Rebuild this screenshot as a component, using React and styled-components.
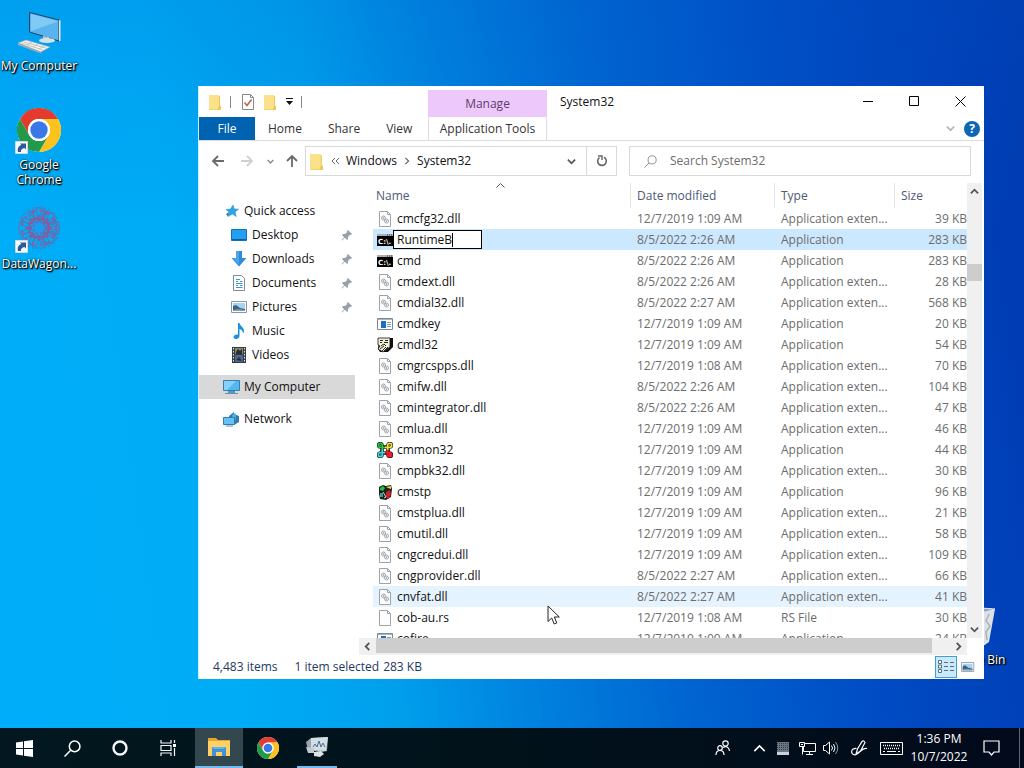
import React from 'react';
import styled, { createGlobalStyle } from 'styled-components';

const GlobalStyle = createGlobalStyle`
  * {
    box-sizing: border-box;
  }

  body {
    margin: 0;
    font-family: 'Open Sans', 'Noto Sans', sans-serif;
    font-size: 12px;
    line-height: 16px;
    color: #111;
  }

  button, input {
    font: inherit;
    color: inherit;
    margin: 0;
    padding: 0;
    border: 0;
    background: none;
  }

  button {
    cursor: default;
  }

  svg {
    display: block;
    flex: none;
  }
`;

const Screen = styled.div`
  display: flex;
  flex-direction: column;
  height: 100vh;
  overflow: hidden;
  background:
    linear-gradient(180deg, rgba(0, 90, 200, 0.16), rgba(0, 90, 200, 0) 30%),
    linear-gradient(82deg, #00adf8 0%, #00acf6 22%, #009fec 36%, #0084e0 47%, #0064d0 62%, #004cc4 78%, #003eb6 94%, #003ab0 100%);
`;

const Desktop = styled.main`
  position: relative;
  flex: 1;
  min-height: 0;
`;

const Shortcuts = styled.div`
  display: flex;
  flex-direction: column;
  width: 78px;
  padding-top: 8px;
`;

const Shortcut = styled.button`
  display: flex;
  flex-direction: column;
  align-items: center;
  gap: 2px;
  min-height: 99px;
  line-height: 15px;
  color: #fff;
  text-shadow: 1px 1px 1px #000, 1px 1px 2px #000, 0 0 2px rgba(0, 0, 0, 0.8);
`;

const Bin = styled(Shortcut)`
  position: absolute;
  right: 12px;
  bottom: 27px;
  width: 76px;
`;

const Window = styled.section`
  position: absolute;
  top: 86px;
  right: 40px;
  bottom: 49px;
  left: 198px;
  display: flex;
  flex-direction: column;
  background: #fff;
  border-left: 1px solid #c4f3ff;
`;

const Ribbon = styled.header`
  display: flex;
  height: 55px;
  border-bottom: 1px solid #dcdcdc;
`;

const RibbonPart = styled.div`
  display: flex;
  flex-direction: column;
  flex: ${p => (p.$grow ? 1 : 'none')};
  width: ${p => (p.$grow ? 'auto' : '229px')};
`;

const QuickTools = styled.div`
  display: flex;
  align-items: center;
  gap: 7px;
  height: 31px;
  padding-left: 8px;
`;

const Bar = styled.span`
  width: 1px;
  height: 12px;
  margin-right: 3px;
  background: #888;
`;

const Tabs = styled.nav`
  display: flex;
  height: 23px;
`;

const Tab = styled.button`
  flex: none;
  padding: 0 13px;
  color: #333;
`;

const FileTab = styled(Tab)`
  width: 56px;
  background: #0063b1;
  color: #fff;
`;

const ContextTab = styled.div`
  display: flex;
  flex-direction: column;
  width: 119px;
  padding-top: 4px;
`;

const ContextTitle = styled.div`
  height: 27px;
  line-height: 27px;
  text-align: center;
  background: #ecc8fb;
  color: #5b3f6b;
`;

const ContextButton = styled.button`
  height: 23px;
  border: solid #e2dbe6;
  border-width: 0 1px;
  color: #333;
`;

const TitleRow = styled.div`
  display: flex;
  height: 31px;
  line-height: 31px;
  padding: 0 1px 0 13px;
`;

const Title = styled.h1`
  flex: 1;
  margin: 0;
  font-size: 12px;
  font-weight: 400;
`;

const WindowButton = styled.button`
  display: flex;
  align-items: center;
  justify-content: center;
  width: 46px;
`;

const HelpRow = styled.div`
  display: flex;
  align-items: center;
  justify-content: flex-end;
  gap: 9px;
  height: 23px;
  padding-right: 4px;
`;

const Help = styled.button`
  width: 16px;
  height: 16px;
  border-radius: 50%;
  background: #0c66b4;
  color: #fff;
  font-weight: 700;
  line-height: 16px;
`;

const AddressRow = styled.div`
  display: flex;
  align-items: center;
  height: 42px;
  padding: 0 13px 2px 12px;
`;

const NavButtons = styled.div`
  display: flex;
  align-items: center;
  gap: 15px;
  width: 88px;
  margin-right: 6px;

  svg:nth-child(3) {
    margin: 0 -4px 0 -2px;
  }
`;

const AddressBox = styled.div`
  display: flex;
  align-items: center;
  flex: 1;
  gap: 6px;
  height: 30px;
  padding-left: 2px;
  border: 1px solid #d9d9d9;
`;

const Crumb = styled.button`
  color: #111;
`;

const AddressEnd = styled.div`
  display: flex;
  align-items: center;
  align-self: stretch;
  gap: 10px;
  margin-left: auto;
`;

const Refresh = styled.button`
  display: flex;
  align-items: center;
  justify-content: center;
  align-self: stretch;
  width: 30px;
  border-left: 1px solid #d9d9d9;
`;

const SearchBox = styled.label`
  display: flex;
  align-items: center;
  gap: 13px;
  width: 342px;
  height: 30px;
  margin-left: 12px;
  padding-left: 14px;
  border: 1px solid #d9d9d9;

  input {
    flex: 1;
    min-width: 0;
    outline: 0;
  }

  input::placeholder {
    color: #6d6d6d;
    opacity: 1;
  }
`;

const Body = styled.div`
  display: flex;
  flex: 1;
  min-height: 0;
  padding-right: 2px;
`;

const Sidebar = styled.nav`
  width: 156px;
  margin-right: 4px;
  padding-top: 16px;
`;

const Place = styled.button`
  display: flex;
  align-items: center;
  gap: 4px;
  width: 100%;
  height: 24px;
  margin-bottom: ${p => (p.$last ? 8 : 0)}px;
  padding: 0 2px 0 ${p => (p.$nested ? 32 : 24)}px;
  background: ${p => (p.$active ? '#d9d9d9' : 'none')};

  svg:last-child:not(:first-child) {
    margin-left: auto;
  }
`;

const Content = styled.div`
  display: flex;
  flex-direction: column;
  flex: 1;
  min-width: 0;
`;

const ListArea = styled.div`
  flex: 1;
  min-height: 0;
  overflow: hidden;
  padding-left: 14px;
`;

const FileTable = styled.table`
  width: 100%;
  table-layout: fixed;
  border-collapse: separate;
  border-spacing: 0;
`;

const HeadCell = styled.th`
  position: relative;
  width: ${p => p.$width || 'auto'};
  height: 25px;
  padding: 0 0 0 ${p => (p.$first ? 3 : 6)}px;
  border-left: ${p => (p.$first ? 0 : 1)}px solid #e5e5e5;
  font-weight: 400;
  text-align: left;
  color: #4c5a76;
`;

const SortMark = styled.svg`
  position: absolute;
  top: 0;
  left: calc(50% - 6px);
`;

const Row = styled.tr`
  height: 21px;
  background: ${p => (p.$selected ? '#cce8ff' : p.$hover ? '#e5f3ff' : 'none')};
`;

const Cell = styled.td`
  padding: 0 0 0 7px;
  line-height: 16px;
  white-space: nowrap;
  text-align: ${p => (p.$right ? 'right' : 'left')};
  color: #6d6d6d;
`;

const NameCell = styled(Cell)`
  padding-left: 4px;
  color: #111;
`;

const FileName = styled.div`
  display: flex;
  align-items: center;
  gap: ${p => (p.$editing ? 0 : 4)}px;
  height: 21px;
`;

const RenameBox = styled.label`
  display: flex;
  align-items: center;
  width: 89px;
  height: 19px;
  padding-left: 3px;
  border: 1px solid #000;
  background: #fff;

  input {
    field-sizing: content;
    outline: 0;
  }
`;

const Caret = styled.span`
  width: 1px;
  height: 14px;
  background: #000;
`;

const HScroll = styled.div`
  display: flex;
  height: 17px;
  background: #f0f0f0;
`;

const ScrollButton = styled.button`
  display: flex;
  align-items: center;
  justify-content: center;
  flex: none;
  width: 17px;
  height: 17px;
`;

const HThumb = styled.div`
  width: 556px;
  max-width: 94%;
  height: 15px;
  margin-right: auto;
  background: #cdcdcd;
`;

const VScroll = styled.div`
  display: flex;
  flex-direction: column;
  width: 15px;
  margin-bottom: 17px;
  background: #f0f0f0;

  ${ScrollButton} {
    width: 15px;
  }
`;

const VThumb = styled.div`
  height: 17px;
  margin: 64px 0 auto;
  background: #cdcdcd;
`;

const StatusBar = styled.footer`
  display: flex;
  align-items: center;
  height: 24px;
  padding: 0 5px 0 14px;
  color: #1e3a5f;

  span {
    margin-right: 17px;
  }

  span + span {
    margin-right: 4px;
  }
`;

const ViewButton = styled.button`
  display: flex;
  align-items: center;
  justify-content: center;
  width: 22px;
  height: 22px;
  border: 1px solid ${p => (p.$on ? '#3f9fd8' : 'transparent')};
  background: ${p => (p.$on ? '#cbe9f8' : 'none')};

  &:first-of-type {
    margin-left: auto;
  }
`;

const Pointer = styled.svg`
  position: absolute;
  top: 605px;
  left: 547px;
`;

const Taskbar = styled.footer`
  display: flex;
  height: 40px;
  background: linear-gradient(90deg, #02171f, #01121b 50%, #020a1b);
  color: #fff;
`;

const TaskButton = styled.button`
  display: flex;
  align-items: center;
  justify-content: center;
  width: ${p => p.$width || 48}px;
`;

const AppButton = styled(TaskButton)`
  margin-left: ${p => (p.$active ? 3 : 1)}px;
  background: ${p => (p.$active ? '#33474f' : 'none')};
  border-bottom: ${p => (p.$active ? '2px solid #76b9ed' : '0')};
`;

const RunningButton = styled(TaskButton)`
  margin-left: 5px;
  border-bottom: 2px solid #76b9ed;
`;

const Tray = styled.div`
  display: flex;
  margin-left: auto;
`;

const Clock = styled.time`
  display: flex;
  flex-direction: column;
  justify-content: center;
  align-items: center;
  width: 56px;
  margin-left: 4px;
  line-height: 18px;
`;

const ShowDesktop = styled.button`
  width: 5px;
  margin-left: 4px;
  border-left: 1px solid #5c6670;
`;

const Chevron = ({ dir = 'down', size = 9, color = '#555', width = 2 }) => {
  const turn = { down: 0, left: 90, up: 180, right: 270 }[dir];
  return (
    <svg width={size} height={size} viewBox="0 0 10 10">
      <path d="M1 3l4 4 4-4" fill="none" stroke={color} strokeWidth={width} transform={`rotate(${turn} 5 5)`} />
    </svg>
  );
};

const FolderIcon = ({ size = 16 }) => (
  <svg width={size} height={size} viewBox="0 0 16 16">
    <path d="M2 1h10v11h2v4H2z" fill="#f5d568" />
    <path d="M2 1h10v14H2z" fill="#fbe28a" />
    <path d="M12 2h1v10h1v4h-3v-3h1z" fill="#edc856" />
  </svg>
);

const CheckIcon = () => (
  <svg width="14" height="16" viewBox="0 0 14 16">
    <path d="M1.500.5h8l3 3v12h-11z" fill="#fff" stroke="#888" />
    <path d="M9.500.5v3h3" fill="none" stroke="#888" />
    <path d="M3.500 8.500l2.500 3 4.500-6" fill="none" stroke="#c0634e" strokeWidth="1.600" />
  </svg>
);

const ArrowIcon = ({ dir, color = '#6a6a6a' }) => {
  const turn = { left: 0, up: 90, right: 180 }[dir];
  return (
    <svg width="14" height="14" viewBox="0 0 14 14">
      <path d="M13 7H2M7 2L2 7l5 5" fill="none" stroke={color} strokeWidth="1.800" transform={`rotate(${turn} 7 7)`} />
    </svg>
  );
};

const PinIcon = () => (
  <svg width="12" height="12" viewBox="0 0 12 12">
    <path d="M7 1l4 4-1 1-1-.3L7 8v2L6 11 3.800 8.800 1 11.500l-.500-.500L3.200 8.200 1 6l1-1h2l2.300-2L6 2z" fill="#98a1a9" />
  </svg>
);

const StarIcon = () => (
  <svg width="17" height="16" viewBox="0 0 17 16">
    <path d="M10 2l1.300 4 4.200.2-3.300 2.700 1 4.600L9.500 11 5 13.500l1.300-4.300L3 6.500l4.500-.4z" fill="#2fa5e8" stroke="#2788c4" strokeWidth=".5" />
    <path d="M3 11l3-2-1 4.500z" fill="#1a79b8" />
  </svg>
);

const DesktopIcon = () => (
  <svg width="17" height="16" viewBox="0 0 17 16">
    <path d="M.5 2.500h15v11H.5z" fill="#23a1f0" stroke="#1670b4" />
    <path d="M1 12h14v1H1z" fill="#115fa0" />
  </svg>
);

const DownloadIcon = () => (
  <svg width="17" height="16" viewBox="0 0 17 16">
    <path d="M5 0h6v7h4.500L8 15.500.5 7H5z" fill="#2d8bd8" />
    <path d="M5 0h3v14L1.500 7H5z" fill="#4ba5e8" />
  </svg>
);

const DocumentIcon = () => (
  <svg width="17" height="16" viewBox="0 0 17 16">
    <path d="M2.500.5h8l3 3v12h-11z" fill="#fff" stroke="#7d8b95" />
    <path d="M5 4.500h4M5 6.500h2m2 0h2.500M5 8.500h6.500M5 10.500h2m2 0h2.500M5 12.500h6.500" stroke="#3e95cd" />
  </svg>
);

const PictureIcon = ({ width = 17 }) => (
  <svg width={width} height="14" viewBox="0 0 17 14">
    <path d="M.5 1.500h15v11H.5z" fill="#fff" stroke="#8b96a0" />
    <path d="M2 3h12v8H2z" fill="#a8d3ef" />
    <path d="M2 11V6l3-1 4 3 5 1v2z" fill="#3c6385" />
    <path d="M2 11v-1l5-1 7 1v1z" fill="#7ca1b5" />
  </svg>
);

const MusicIcon = () => (
  <svg width="17" height="16" viewBox="0 0 17 16">
    <path d="M7 0h1.500c.5 3 4.500 4 4.500 8 0 1-.5 2-1 2.500C12 7.500 10 6.500 8.500 6v7c0 1.500-1.500 3-3.500 3-1.500 0-2.500-.8-2.500-2s1.500-2.600 3.500-2.600H7z" fill="#1b90dd" />
  </svg>
);

const VideoIcon = () => (
  <svg width="17" height="16" viewBox="0 0 17 16">
    <path d="M1 0h14v16H1z" fill="#333b46" />
    <path d="M4 1h8v6H4z" fill="#8d8c58" />
    <path d="M4 8h8v7H4z" fill="#52658a" />
    <path d="M5 5l2-3 2 2 2-2v5H5zM5 13l3-3 3 4z" fill="#252f38" />
    <path d="M2.500 1v15M13.500 1v15" stroke="#e5e8eb" strokeWidth="1" strokeDasharray="1.500 1.500" />
  </svg>
);

const MonitorIcon = () => (
  <svg width="17" height="16" viewBox="0 0 17 16">
    <path d="M.5 1.500h16v10H.5z" fill="#54b8f0" stroke="#367fae" />
    <path d="M1 2h12L4 11H1z" fill="#86d2fb" />
    <path d="M5 12h7v2H5zM2 14h13v1H2z" fill="#5c94b8" />
  </svg>
);

const NetworkIcon = () => (
  <svg width="17" height="16" viewBox="0 0 17 16">
    <path d="M6 5l5-4v2l5 2v6l-5 3-5-2z" fill="#2c7db4" />
    <path d="M9 4l3-2 1 2-1 8-2-1z" fill="#56aee2" />
    <path d="M.5 6.500h11v7H.5z" fill="#67c2f4" stroke="#327dac" />
    <path d="M3 15h7" stroke="#5c94b8" />
  </svg>
);

const DllIcon = () => (
  <svg width="16" height="16" viewBox="0 0 16 16">
    <path d="M2.500.5h8l3 3v12h-11z" fill="#fdfdfd" stroke="#9da3a8" />
    <path d="M10.500.5v3h3" fill="none" stroke="#9da3a8" />
    <circle cx="6.500" cy="7" r="2" fill="#eef2f4" stroke="#9ba3a9" strokeWidth=".9" />
    <circle cx="6.500" cy="7" r=".7" fill="#8b949b" />
    <circle cx="9.500" cy="10" r="2" fill="#eef2f4" stroke="#9ba3a9" strokeWidth=".9" />
    <circle cx="9.500" cy="10" r=".7" fill="#8b949b" />
  </svg>
);

const BlankIcon = () => (
  <svg width="16" height="16" viewBox="0 0 16 16">
    <path d="M2.500.5h8l3 3v12h-11z" fill="#fdfdfd" stroke="#9da3a8" />
    <path d="M10.500.5v3h3" fill="none" stroke="#9da3a8" />
  </svg>
);

const CmdIcon = () => (
  <svg width="16" height="16" viewBox="0 0 16 16">
    <path d="M0 2h16v12H0z" fill="#000" />
    <path d="M0 2h16v2H0z" fill="#a9b1b8" />
    <path d="M10 3h1m1 0h1m1 0h1" stroke="#333" />
    <text x="1" y="12" fill="#fff" fontSize="7" fontWeight="700" fontFamily="DejaVu Sans, sans-serif">C:\.</text>
  </svg>
);

const ExeIcon = () => (
  <svg width="16" height="16" viewBox="0 0 16 16">
    <path d="M.5 2.500h15v11H.5z" fill="#fff" stroke="#7d8992" />
    <path d="M1 3h14v1H1z" fill="#a9b5bf" />
    <path d="M4 5h5v7H4z" fill="#1f6fc0" />
    <path d="M10 6.500h4M10 8.500h4M10 10.500h4" stroke="#7d9cb5" />
  </svg>
);

const SheetIcon = () => (
  <svg width="16" height="16" viewBox="0 0 16 16">
    <path d="M2 1h14v9l-5 5H3l-2-3z" fill="#111" />
    <path d="M1 1h12v9l-3 2-4 3-5-3 2-3-2-1z" fill="#f3efd9" stroke="#111" strokeWidth=".8" />
    <path d="M3 3.500h3m2 0h3M3 5.500h2m2 0h4M4 9l3-2 2 2M3 12l4-3M5 14l4-4M7 14l4-4" stroke="#222" fill="none" />
  </svg>
);

const KnotIcon = () => (
  <svg width="16" height="16" viewBox="0 0 16 16" fill="none">
    <path d="M5 5h6v6H5z" stroke="#111" strokeWidth="3.600" />
    {[[3.300, 3.300], [12.700, 3.300], [3.300, 12.700], [12.700, 12.700]].map(([x, y]) => (
      <circle key={`${x}-${y}`} cx={x} cy={y} r="2" fill="#fff" stroke="#111" strokeWidth="3" />
    ))}
    <path d="M5.300 8.500V3.300a2 2 0 1 0-2 2H8" stroke="#28c840" strokeWidth="1.700" />
    <path d="M8 5.300h4.700a2 2 0 1 0-2-2V8" stroke="#ede23d" strokeWidth="1.700" />
    <path d="M5.300 7.500v5.200a2 2 0 1 1-2-2H8" stroke="#42d5df" strokeWidth="1.700" />
    <path d="M8 10.700h4.700a2 2 0 1 1-2 2V8" fill="#ed1b2d" stroke="#ed1b2d" strokeWidth="1.700" />
    <path d="M7 7h2v2H7z" fill="#fff" />
  </svg>
);

const SetupIcon = () => (
  <svg width="16" height="16" viewBox="0 0 16 16">
    <path d="M2 3l4-2 3 1 5-1 1 4-1 8-5 3-6-1-1-5z" fill="#16241c" />
    <path d="M3 4l3-2 2 2-2 3-3-1z" fill="#2bbc45" />
    <path d="M9 3l5-1v3l-3-1z" fill="#e8dc3f" />
    <path d="M9 8l4-2 1 5-3 4-2-2z" fill="#c9202c" />
    <path d="M3 9h3v4H3z" fill="#3b9aa0" />
    <path d="M6 8l3 5-2 1" stroke="#cbd3cd" fill="none" />
  </svg>
);

const ComputerIcon = () => (
  <svg width="48" height="48" viewBox="0 0 48 48">
    <path d="M14.500 4.500L44 12v21L14.500 24z" fill="#59b4ef" stroke="#20445f" />
    <path d="M16 6l26 7v1L16 23z" fill="#94d3fa" opacity=".7" />
    <path d="M44 12l1.500.5V33L44 33z" fill="#dfe8ee" />
    <path d="M28 28l6 1v3h-6z" fill="#b9c8d2" />
    <ellipse cx="32" cy="32.500" rx="8" ry="2.600" fill="#d8e1e8" />
    <path d="M3 35l8-3 24 7-9 5z" fill="#f3f2ee" stroke="#a4a7a8" strokeWidth=".6" />
    <path d="M3 35.500l23 8.500v1.500L3 37z" fill="#a5abb0" />
    <path d="M6 35l22 7M9 34l22 6M12 37l5-3M18 39l5-3M24 41l5-3" stroke="#b9bcbe" strokeWidth=".8" />
  </svg>
);

const ChromeLogo = ({ size = 44 }) => (
  <svg width={size} height={size} viewBox="0 0 48 48">
    <circle cx="24" cy="24" r="24" fill="#fff" />
    <path d="M3.200 12A24 24 0 0 1 44.800 12H24a12 12 0 0 0-10.400 18z" fill="#e33b2e" />
    <path d="M44.800 12A24 24 0 0 1 24 48l10.400-18A12 12 0 0 0 24 12z" fill="#fcc31e" />
    <path d="M24 48A24 24 0 0 1 3.200 12l10.400 18a12 12 0 0 0 20.800 0z" fill="#23994a" />
    <circle cx="24" cy="24" r="12" fill="#fff" />
    <circle cx="24" cy="24" r="9.500" fill="#3b78e7" />
  </svg>
);

const LinkBadge = () => (
  <g>
    <path d="M.5 34.500h12v12H.5z" fill="#f6f9fc" stroke="#cfd8e0" />
    <path d="M3 45c-1-4 1-6.500 3.500-7L5 36.500h6v6L9.500 41C7 41.500 5.500 43 6 45z" fill="#2a5c9c" />
  </g>
);

const ChromeShortcutIcon = () => (
  <svg width="48" height="48" viewBox="0 0 48 48">
    <svg x="2" y="1" width="44" height="44"><ChromeLogo /></svg>
    <LinkBadge />
  </svg>
);

const MandalaIcon = () => (
  <svg width="48" height="48" viewBox="0 0 48 48">
    <g fill="none" stroke="#7a5fa8" strokeWidth=".8">
      {[0, 45, 90, 135].map(a => (
        <g key={a} transform={`rotate(${a} 24 22)`}>
          <path d="M18 2h12v8l-6 5-6-5zM24 1l8 8-8 7-8-7z" />
          <path d="M18 42h12v-8l-6-5-6 5z" />
          <path d="M15 13h18v18H15z" />
        </g>
      ))}
      {[22, 67, 112, 157].map(a => (
        <path key={a} d="M20 4h8v36h-8z" transform={`rotate(${a} 24 22)`} />
      ))}
    </g>
    <circle cx="24" cy="22" r="17" fill="none" stroke="#c04a6a" strokeDasharray="2 6" strokeWidth="1.600" />
    <circle cx="24" cy="22" r="10" fill="none" stroke="#c04a6a" strokeDasharray="2 3" strokeWidth="1.600" />
    <circle cx="24" cy="22" r="5" fill="#1c9cec" />
    <LinkBadge />
  </svg>
);

const BinIcon = () => (
  <svg width="48" height="48" viewBox="0 0 48 48">
    <path d="M6 8l36-2-6 36-6 3-18-1z" fill="#c8d3df" />
    <path d="M32 9l13-2-6 33-6 4z" fill="#dfe2e2" />
    <path d="M39 12l-3 7 4 5-4 6 1 8" stroke="#a4b3c2" fill="none" strokeWidth="1.500" />
    <path d="M6 8l10-3 29 2-9 3z" fill="#8fa9cc" stroke="#dbe6f0" />
  </svg>
);

const SearchIcon = ({ size = 14, color = '#777', width = 1 }) => (
  <svg width={size} height={size} viewBox="0 0 16 16" fill="none" stroke={color} strokeWidth={width}>
    <circle cx="10" cy="6" r="5" />
    <path d="M6.300 9.700L.5 15.500" />
  </svg>
);

const ExplorerIcon = () => (
  <svg width="24" height="20" viewBox="0 0 24 20">
    <path d="M1 1h8l2 2h12v6H1z" fill="#e8a72c" />
    <path d="M1 4h22v15H1z" fill="#fdd165" />
    <path d="M5 10h14v9h-4v-4H9v4H5z" fill="#3c93d8" />
    <path d="M5 10h14l-2 2H7z" fill="#65b1e9" />
  </svg>
);

const TaskManagerIcon = () => (
  <svg width="24" height="22" viewBox="0 0 24 22">
    <path d="M1 6l5-4 17-1-1 14-5 1-14-2z" fill="#9aa6ad" />
    <path d="M6 2l17-1-2 14-15-1z" fill="#d3dde3" />
    <path d="M8 11l2-3 2 3 2-6 2 6 2-4 2 4" stroke="#47708f" fill="none" />
    <path d="M1 11l8 1v5H3z" fill="#c0cad0" />
    <path d="M9 16l7-1 3 3-4 3-6-1z" fill="#e0e3e5" />
  </svg>
);

const folders = [
  { name: 'Desktop', Icon: DesktopIcon, pinned: true },
  { name: 'Downloads', Icon: DownloadIcon, pinned: true },
  { name: 'Documents', Icon: DocumentIcon, pinned: true },
  { name: 'Pictures', Icon: PictureIcon, pinned: true },
  { name: 'Music', Icon: MusicIcon },
  { name: 'Videos', Icon: VideoIcon },
];

const DLL = 'Application exten...';
const APP = 'Application';

const files = [
  { name: 'cmcfg32.dll', date: '12/7/2019 1:09 AM', type: DLL, size: 39, Icon: DllIcon },
  { name: 'RuntimeB', date: '8/5/2022 2:26 AM', type: APP, size: 283, Icon: CmdIcon, editing: true },
  { name: 'cmd', date: '8/5/2022 2:26 AM', type: APP, size: 283, Icon: CmdIcon },
  { name: 'cmdext.dll', date: '8/5/2022 2:26 AM', type: DLL, size: 28, Icon: DllIcon },
  { name: 'cmdial32.dll', date: '8/5/2022 2:27 AM', type: DLL, size: 568, Icon: DllIcon },
  { name: 'cmdkey', date: '12/7/2019 1:09 AM', type: APP, size: 20, Icon: ExeIcon },
  { name: 'cmdl32', date: '12/7/2019 1:09 AM', type: APP, size: 54, Icon: SheetIcon },
  { name: 'cmgrcspps.dll', date: '12/7/2019 1:08 AM', type: DLL, size: 70, Icon: DllIcon },
  { name: 'cmifw.dll', date: '8/5/2022 2:26 AM', type: DLL, size: 104, Icon: DllIcon },
  { name: 'cmintegrator.dll', date: '8/5/2022 2:26 AM', type: DLL, size: 47, Icon: DllIcon },
  { name: 'cmlua.dll', date: '12/7/2019 1:09 AM', type: DLL, size: 46, Icon: DllIcon },
  { name: 'cmmon32', date: '12/7/2019 1:09 AM', type: APP, size: 44, Icon: KnotIcon },
  { name: 'cmpbk32.dll', date: '12/7/2019 1:09 AM', type: DLL, size: 30, Icon: DllIcon },
  { name: 'cmstp', date: '12/7/2019 1:09 AM', type: APP, size: 96, Icon: SetupIcon },
  { name: 'cmstplua.dll', date: '12/7/2019 1:09 AM', type: DLL, size: 21, Icon: DllIcon },
  { name: 'cmutil.dll', date: '12/7/2019 1:09 AM', type: DLL, size: 58, Icon: DllIcon },
  { name: 'cngcredui.dll', date: '12/7/2019 1:09 AM', type: DLL, size: 109, Icon: DllIcon },
  { name: 'cngprovider.dll', date: '8/5/2022 2:27 AM', type: DLL, size: 66, Icon: DllIcon },
  { name: 'cnvfat.dll', date: '8/5/2022 2:27 AM', type: DLL, size: 41, Icon: DllIcon, hover: true },
  { name: 'cob-au.rs', date: '12/7/2019 1:08 AM', type: 'RS File', size: 30, Icon: BlankIcon },
  { name: 'cofire', date: '12/7/2019 1:09 AM', type: APP, size: 24, Icon: ExeIcon },
];

function WindowHeader() {
  return (
    <Ribbon>
      <RibbonPart>
        <QuickTools>
          <FolderIcon />
          <Bar />
          <CheckIcon />
          <FolderIcon />
          <svg width="9" height="9" viewBox="0 0 9 9"><path d="M1 1.500h7" stroke="#111" /><path d="M1 4h7L4.500 8z" fill="#111" /></svg>
          <Bar />
        </QuickTools>
        <Tabs>
          <FileTab>File</FileTab>
          <Tab>Home</Tab>
          <Tab>Share</Tab>
          <Tab>View</Tab>
        </Tabs>
      </RibbonPart>
      <ContextTab>
        <ContextTitle>Manage</ContextTitle>
        <ContextButton>Application Tools</ContextButton>
      </ContextTab>
      <RibbonPart $grow>
        <TitleRow>
          <Title>System32</Title>
          <WindowButton aria-label="Minimize">
            <svg width="11" height="11"><path d="M0 5.500h10" stroke="#000" /></svg>
          </WindowButton>
          <WindowButton aria-label="Maximize">
            <svg width="11" height="11"><path d="M.5.5h9v9h-9z" fill="none" stroke="#000" /></svg>
          </WindowButton>
          <WindowButton aria-label="Close">
            <svg width="11" height="11"><path d="M.5.5l10 10M10.500.5l-10 10" stroke="#000" /></svg>
          </WindowButton>
        </TitleRow>
        <HelpRow>
          <Chevron color="#b5b5b5" />
          <Help>?</Help>
        </HelpRow>
      </RibbonPart>
    </Ribbon>
  );
}

function Address() {
  return (
    <AddressRow>
      <NavButtons>
        <ArrowIcon dir="left" />
        <ArrowIcon dir="right" color="#d0d0d0" />
        <Chevron size={7} color="#888" />
        <ArrowIcon dir="up" />
      </NavButtons>
      <AddressBox>
        <FolderIcon size={17} />
        <svg width="9" height="8" viewBox="0 0 9 8"><path d="M4 1L1 4l3 3M8 1L5 4l3 3" fill="none" stroke="#666" /></svg>
        <Crumb>Windows</Crumb>
        <Chevron dir="right" size={8} color="#666" width={1.500} />
        <Crumb>System32</Crumb>
        <AddressEnd>
          <Chevron />
          <Refresh aria-label="Refresh">
            <svg width="12" height="12" viewBox="0 0 12 12">
              <path d="M8 2.300A4.300 4.300 0 1 1 3.500 2.600" fill="none" stroke="#666" strokeWidth="1.600" />
              <path d="M2 1h4v4" fill="none" stroke="#666" strokeWidth="1.400" />
            </svg>
          </Refresh>
        </AddressEnd>
      </AddressBox>
      <SearchBox>
        <SearchIcon size={13} />
        <input type="text" placeholder="Search System32" aria-label="Search System32" />
      </SearchBox>
    </AddressRow>
  );
}

function Places() {
  return (
    <Sidebar>
      <Place><StarIcon />Quick access</Place>
      {folders.map(({ name, Icon, pinned }, i) => (
        <Place key={name} $nested $last={i === folders.length - 1}>
          <Icon />
          {name}
          {pinned && <PinIcon />}
        </Place>
      ))}
      <Place $active $last><MonitorIcon />My Computer</Place>
      <Place><NetworkIcon />Network</Place>
    </Sidebar>
  );
}

function FileList() {
  return (
    <Content>
      <ListArea>
        <FileTable>
          <thead>
            <tr>
              <HeadCell $first>
                Name
                <SortMark width="9" height="5"><path d="M.5 4.500l4-4 4 4" fill="none" stroke="#555" /></SortMark>
              </HeadCell>
              <HeadCell $width="144px">Date modified</HeadCell>
              <HeadCell $width="120px">Type</HeadCell>
              <HeadCell $width="73px">Size</HeadCell>
            </tr>
          </thead>
          <tbody>
            {files.map(({ name, date, type, size, Icon, editing, hover }) => (
              <Row key={name} $selected={editing} $hover={hover}>
                <NameCell>
                  <FileName $editing={editing}>
                    <Icon />
                    {editing ? (
                      <RenameBox>
                        <input type="text" defaultValue={name} aria-label="File name" />
                        <Caret />
                      </RenameBox>
                    ) : name}
                  </FileName>
                </NameCell>
                <Cell>{date}</Cell>
                <Cell>{type}</Cell>
                <Cell $right>{size} KB</Cell>
              </Row>
            ))}
          </tbody>
        </FileTable>
      </ListArea>
      <HScroll>
        <ScrollButton aria-label="Scroll left"><Chevron dir="left" /></ScrollButton>
        <HThumb />
        <ScrollButton aria-label="Scroll right"><Chevron dir="right" /></ScrollButton>
      </HScroll>
    </Content>
  );
}

function SystemBar() {
  return (
    <Taskbar>
      <TaskButton aria-label="Start">
        <svg width="17" height="17" viewBox="0 0 17 17"><path d="M0 2.500L7 1.500V8H0zM8 1.300L17 0v8H8zM0 9h7v6.500L0 14.500zM8 9h9v8l-9-1.300z" fill="#fff" /></svg>
      </TaskButton>
      <TaskButton aria-label="Search"><SearchIcon size={17} color="#fff" width={1.400} /></TaskButton>
      <TaskButton aria-label="Cortana">
        <svg width="16" height="16"><circle cx="8" cy="8" r="6.500" fill="none" stroke="#f4f6f7" strokeWidth="2.400" /></svg>
      </TaskButton>
      <TaskButton aria-label="Task View">
        <svg width="17" height="16" viewBox="0 0 17 16" fill="none" stroke="#f4f6f7" strokeWidth="1.200">
          <path d="M1 0v3h10V0M1 5.500h10v5H1zM1 16v-3h10v3M14.500 0v3M14.500 8v8" />
          <path d="M13 4h3v3h-3z" fill="#fff" stroke="none" />
        </svg>
      </TaskButton>
      <AppButton $active aria-label="File Explorer"><ExplorerIcon /></AppButton>
      <AppButton aria-label="Google Chrome"><ChromeLogo size={22} /></AppButton>
      <RunningButton $width={40} aria-label="Task Manager"><TaskManagerIcon /></RunningButton>
      <Tray>
        <TaskButton aria-label="People">
          <svg width="16" height="16" viewBox="0 0 16 16" fill="none" stroke="#fff" strokeWidth="1.200">
            <circle cx="10.500" cy="3.500" r="2.700" />
            <circle cx="5" cy="8" r="2.300" />
            <path d="M1 15c0-3 1.500-4.500 4-4.500S9 12 9 15M8 7.500c3-2 6-.5 6.500 3.500" />
          </svg>
        </TaskButton>
        <TaskButton $width={24} aria-label="Show hidden icons"><Chevron dir="up" size={13} color="#fff" width={1.200} /></TaskButton>
        <TaskButton $width={24} aria-label="Device">
          <svg width="12" height="13" viewBox="0 0 12 13">
            <path d="M0 0h12v10H0z" fill="#6b7780" />
            <path d="M0 1.500h12M0 3.500h12M0 5.500h12M0 7.500h12" stroke="#33424c" strokeDasharray="1 1" />
            <path d="M0 10h12v3H0z" fill="#cbd3d9" />
          </svg>
        </TaskButton>
        <TaskButton $width={24} aria-label="Network">
          <svg width="17" height="15" viewBox="0 0 17 15" fill="none" stroke="#fff">
            <path d="M4.500 2.500h12v8h-12zM10.500 10.500v3M7 13.500h7M3.500 6v7.500" />
            <path d="M.5 1.500h5v4h-5z" fill="#061620" />
            <path d="M2 3.500h2" />
          </svg>
        </TaskButton>
        <TaskButton $width={24} aria-label="Volume">
          <svg width="16" height="14" viewBox="0 0 16 14" fill="none" stroke="#fff">
            <path d="M.5 4.500h2l4-3.500v12l-4-3.500h-2z" />
            <path d="M8.500 4.500q2 2.500 0 5M10.500 3q3 4 0 8" />
            <path d="M12.500 1q4.500 6 0 12" stroke="#8c959b" />
          </svg>
        </TaskButton>
        <TaskButton $width={32} aria-label="Pen">
          <svg width="17" height="16" viewBox="0 0 17 16" fill="none" stroke="#fff" strokeWidth="1.200">
            <path d="M5 14l1.500-5L11 1.500q2-1.500 3 1L9.500 11zM5.500 8.500C-1 8-.5 15 4 14.800c4-.3 7.500-8 12-6.300" />
          </svg>
        </TaskButton>
        <TaskButton $width={32} aria-label="Touch keyboard">
          <svg width="23" height="13" viewBox="0 0 23 13" fill="none" stroke="#fff">
            <path d="M.5.5h22v12H.5z" />
            <path d="M3 3.500h17M4 6.500h16" strokeDasharray="1 1" strokeWidth="1.400" />
            <path d="M3 9.500h2M7 9.500h9M18 9.500h2" />
          </svg>
        </TaskButton>
        <Clock>
          <span>1:36 PM</span>
          <span>10/7/2022</span>
        </Clock>
        <TaskButton aria-label="Notifications">
          <svg width="17" height="16" viewBox="0 0 17 16" fill="none" stroke="#fff" strokeWidth="1.200">
            <path d="M1 1h15v11h-5l-2.500 3L6 12H1z" />
          </svg>
        </TaskButton>
        <ShowDesktop aria-label="Show desktop" />
      </Tray>
    </Taskbar>
  );
}

function App() {
  return (
    <Screen>
      <GlobalStyle />
      <Desktop>
        <Shortcuts>
          <Shortcut><ComputerIcon />My Computer</Shortcut>
          <Shortcut><ChromeShortcutIcon /><span>Google<br />Chrome</span></Shortcut>
          <Shortcut><MandalaIcon />DataWagon...</Shortcut>
        </Shortcuts>
        <Bin><BinIcon />Recycle Bin</Bin>
        <Window>
          <WindowHeader />
          <Address />
          <Body>
            <Places />
            <FileList />
            <VScroll>
              <ScrollButton aria-label="Scroll up"><Chevron dir="up" /></ScrollButton>
              <VThumb />
              <ScrollButton aria-label="Scroll down"><Chevron /></ScrollButton>
            </VScroll>
          </Body>
          <StatusBar>
            <span>4,483 items</span>
            <span>1 item selected</span>
            <span>283 KB</span>
            <ViewButton $on aria-label="Details view">
              <svg width="16" height="14" viewBox="0 0 16 14" fill="none" stroke="#557085">
                <path d="M.5.5h3v3h-3zM.5 5h3v3h-3zM.5 9.500h3v3h-3z" fill="#fff" />
                <path d="M6 2.500h4M12 2.500h4M6 6.500h4M12 6.500h4M6 10.500h4M12 10.500h4" />
              </svg>
            </ViewButton>
            <ViewButton aria-label="Large thumbnails"><PictureIcon width={14} /></ViewButton>
          </StatusBar>
        </Window>
        <Pointer width="14" height="21" viewBox="0 0 14 21">
          <path d="M1 1v15.500l3.700-3.500 2.500 6 2.600-1.100L7.300 12h5z" fill="#fff" stroke="#222" />
        </Pointer>
      </Desktop>
      <SystemBar />
    </Screen>
  );
}

export default App;
